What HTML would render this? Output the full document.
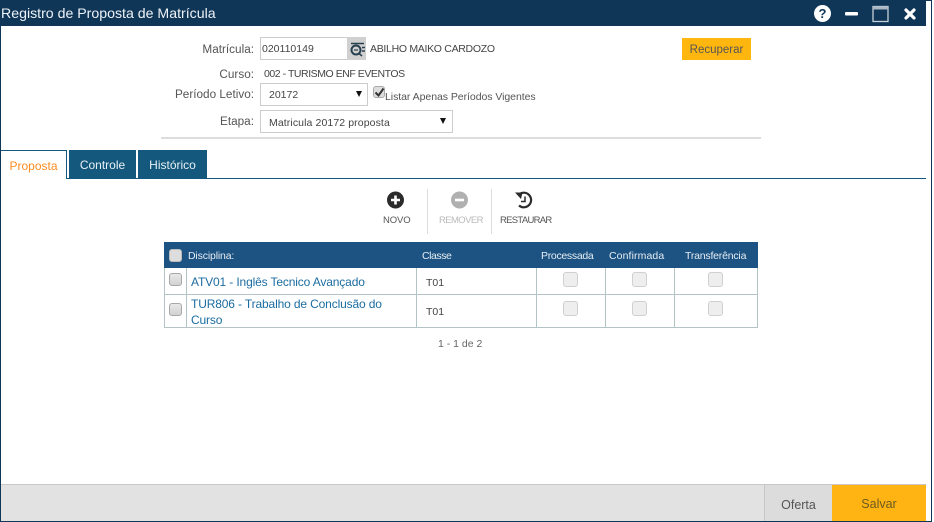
<!DOCTYPE html>
<html><head><meta charset="utf-8"><style>
html,body{margin:0;padding:0;background:#fff;width:934px;height:522px;overflow:hidden}
body{font-family:"Liberation Sans",sans-serif;position:relative;color:#444}
.a{position:absolute;white-space:nowrap}
.l{font-size:11.75px;color:#555;text-align:right;width:120px;left:134px}
.t{font-size:10.5px;color:#444}
.box{position:absolute;background:#fff;border:1px solid #ccc;box-sizing:border-box;font-size:10.5px;color:#444;white-space:nowrap}
.arrow{position:absolute;width:0;height:0;border-left:3px solid transparent;border-right:3px solid transparent;border-top:6px solid #111}
.cb{position:absolute;box-sizing:border-box;width:13px;height:13px;border-radius:3px;background:linear-gradient(#e8e8e8,#d2d2d2);border:1px solid #a8a8a8}
.cd{position:absolute;box-sizing:border-box;width:15px;height:15px;border-radius:3px;background:#eee;border:1px solid #d0d0d0}
.tab{position:absolute;top:150px;height:28px;background:#14597d;color:#e8f0f5;font-size:12px;line-height:30px;text-align:center;box-sizing:border-box}
.h{position:absolute;font-size:10.5px;color:#e6edf3;top:250px;white-space:nowrap;letter-spacing:-.15px}
.ln{position:absolute;background:#b3c3c6}
.lnk{position:absolute;font-size:12px;color:#1b6ca0;white-space:nowrap;letter-spacing:-.14px}
</style></head><body>
<div class="a" style="left:0;top:0;width:926px;height:26px;background:#0f3557"></div>
<div class="a" style="left:0;top:0;width:1px;height:522px;background:#0f3557"></div>
<div class="a" style="left:931px;top:0;width:1px;height:522px;background:#0f3557"></div>
<div class="a" style="left:926px;top:0;width:6px;height:1px;background:#0f3557"></div>
<div class="a" style="left:0;top:521px;width:932px;height:1px;background:#0f3557"></div>
<div class="a" style="left:1px;top:4px;font-size:14.15px;line-height:18px;color:#eef3f7">Registro de Proposta de Matrícula</div>
<svg class="a" style="left:812px;top:3px" width="104" height="20" viewBox="0 0 104 20">
<circle cx="10.5" cy="10.5" r="8.5" fill="#fff"/>
<text x="10.5" y="15" font-family="Liberation Sans" font-size="13" font-weight="bold" text-anchor="middle" fill="#0f3557">?</text>
<rect x="33" y="9" width="13" height="3.5" rx="1" fill="#fff"/>
<rect x="61" y="3.5" width="15" height="15" fill="none" stroke="#c5d0d8" stroke-width="1.3"/>
<rect x="61" y="3.5" width="15" height="3" fill="#a9b8c4"/>
<path d="M94 7L102 15M102 7L94 15" stroke="#fff" stroke-width="3.2" stroke-linecap="round"/>
</svg>

<div class="a l" style="top:43px">Matrícula:</div>
<div class="box" style="left:260px;top:37px;width:88px;height:23px;line-height:23px;padding-left:1px">020110149</div>
<div class="a" style="left:347px;top:37px;width:19px;height:23px;background:#d0d0d0"></div>
<svg class="a" style="left:349px;top:40px" width="17" height="18" viewBox="0 0 17 18">
<circle cx="7" cy="10" r="4.5" fill="none" stroke="#27404f" stroke-width="2"/>
<path d="M10 13.5L13 16M2 3.5H15M13 7.5H16M13 11H16" stroke="#27404f" stroke-width="1.5" fill="none"/>
<path d="M5 10H9" stroke="#27404f" stroke-width="1.2"/>
</svg>
<div class="a t" style="left:370px;top:43px;letter-spacing:-.3px">ABILHO MAIKO CARDOZO</div>

<div class="a" style="left:682px;top:38px;width:69px;height:22px;background:#ffb70f;color:#555;font-size:11.5px;line-height:24px;text-align:center">Recuperar</div>

<div class="a l" style="top:68px">Curso:</div>
<div class="a t" style="left:264px;top:68px;letter-spacing:-.45px">002 - TURISMO ENF EVENTOS</div>

<div class="a l" style="top:88px">Período Letivo:</div>
<div class="box" style="left:260px;top:83px;width:108px;height:23px;line-height:23px;padding-left:8px">20172</div>
<div class="arrow" style="left:356px;top:91px"></div>
<div class="a" style="left:373px;top:86px;width:12px;height:12px;box-sizing:border-box;border:1px solid #aaa;border-radius:3px;background:#ddd"></div>
<svg class="a" style="left:374px;top:87px" width="11" height="11"><path d="M1.5 5.5L4.5 8.5L9.5 1.5" stroke="#333" stroke-width="2" fill="none"/></svg>
<div class="a" style="left:385px;top:91px;font-size:10.5px;color:#555;letter-spacing:-.05px">Listar Apenas Períodos Vigentes</div>

<div class="a l" style="top:115px">Etapa:</div>
<div class="box" style="left:260px;top:110px;width:193px;height:23px;line-height:24px;padding-left:8px;letter-spacing:.1px">Matricula 20172 proposta</div>
<div class="arrow" style="left:440px;top:118px"></div>

<div class="a" style="left:161px;top:137px;width:600px;height:2px;background:#ddd"></div>

<div class="a" style="left:1px;top:178px;width:925px;height:1px;background:#14597d"></div>
<div class="a" style="left:1px;top:150px;width:66px;height:29px;background:#fff;border-top:1px solid #14597d;border-right:1px solid #14597d;box-sizing:border-box;color:#fb8c1e;font-size:12px;line-height:30px;text-align:center">Proposta</div>
<div class="tab" style="left:69px;width:67px">Controle</div>
<div class="tab" style="left:138px;width:69px">Histórico</div>

<svg class="a" style="left:385px;top:189px" width="165" height="24" viewBox="0 0 165 24">
<circle cx="10.5" cy="11" r="8.5" fill="#2b2b2b"/><path d="M10.5 6.5V15.5M6 11H15" stroke="#fff" stroke-width="2.6"/>
<circle cx="74.5" cy="11" r="8.5" fill="#b0b0b0"/><path d="M70 11H79" stroke="#fff" stroke-width="2.6"/>
<path d="M134 5.5A7.3 7.3 0 1 1 134 16.5" fill="none" stroke="#2b2b2b" stroke-width="2.2"/>
<path d="M130 3.5L137.5 3.5L136 10Z" fill="#2b2b2b"/>
<path d="M140 7.5V12.5H136" fill="none" stroke="#2b2b2b" stroke-width="1.5"/>
</svg>
<div class="a" style="left:427px;top:189px;width:1px;height:45px;background:#ddd"></div>
<div class="a" style="left:491px;top:189px;width:1px;height:45px;background:#ddd"></div>
<div class="a" style="left:383px;top:215px;font-size:9.5px;color:#555;letter-spacing:-.1px">NOVO</div>
<div class="a" style="left:439px;top:215px;font-size:9.5px;color:#bbb;letter-spacing:-.6px">REMOVER</div>
<div class="a" style="left:500px;top:215px;font-size:9.5px;color:#555;letter-spacing:-.7px">RESTAURAR</div>

<div class="a" style="left:164px;top:242px;width:594px;height:26px;background:#1c5383"></div>
<div class="cb" style="left:169px;top:249px;background:#ddd;border-color:#bbb"></div>
<div class="h" style="left:188px">Disciplina:</div>
<div class="h" style="left:422px;letter-spacing:-.45px">Classe</div>
<div class="h" style="left:541px;letter-spacing:-.3px">Processada</div>
<div class="h" style="left:609px;letter-spacing:.1px">Confirmada</div>
<div class="h" style="left:685px;letter-spacing:-.2px">Transferência</div>

<div class="ln" style="left:164px;top:294px;width:594px;height:1px"></div>
<div class="ln" style="left:164px;top:327px;width:594px;height:1px"></div>
<div class="ln" style="left:164px;top:268px;width:1px;height:60px"></div>
<div class="ln" style="left:186px;top:268px;width:1px;height:60px"></div>
<div class="ln" style="left:416px;top:268px;width:1px;height:60px"></div>
<div class="ln" style="left:536px;top:268px;width:1px;height:60px"></div>
<div class="ln" style="left:605px;top:268px;width:1px;height:60px"></div>
<div class="ln" style="left:674px;top:268px;width:1px;height:60px"></div>
<div class="ln" style="left:757px;top:268px;width:1px;height:60px"></div>

<div class="cb" style="left:169px;top:273px"></div>
<div class="cb" style="left:169px;top:303px"></div>
<div class="lnk" style="left:191px;top:275px">ATV01 - Inglês Tecnico Avançado</div>
<div class="lnk" style="left:191px;top:297px">TUR806 - Trabalho de Conclusão do</div>
<div class="lnk" style="left:191px;top:313px">Curso</div>
<div class="a t" style="left:426px;top:277px">T01</div>
<div class="a t" style="left:426px;top:306px">T01</div>
<div class="cd" style="left:563px;top:272px"></div>
<div class="cd" style="left:632px;top:272px"></div>
<div class="cd" style="left:708px;top:272px"></div>
<div class="cd" style="left:563px;top:301px"></div>
<div class="cd" style="left:632px;top:301px"></div>
<div class="cd" style="left:708px;top:301px"></div>
<div class="a" style="left:438px;top:338px;font-size:10.5px;color:#666">1 - 1 de 2</div>

<div class="a" style="left:1px;top:484px;width:925px;height:37px;background:#e2e2e2;border-top:1px solid #c8c8c8;box-sizing:border-box"></div>
<div class="a" style="left:764px;top:484px;width:68px;height:37px;background:#dcdcdc;border-left:1px solid #c8c8c8;border-top:1px solid #c8c8c8;box-sizing:border-box;font-size:12.5px;line-height:40px;text-align:center;color:#555">Oferta</div>
<div class="a" style="left:832px;top:485px;width:94px;height:36px;background:#ffb414;font-size:12.5px;line-height:39px;text-align:center;color:#6b5a20">Salvar</div>
</body></html>
